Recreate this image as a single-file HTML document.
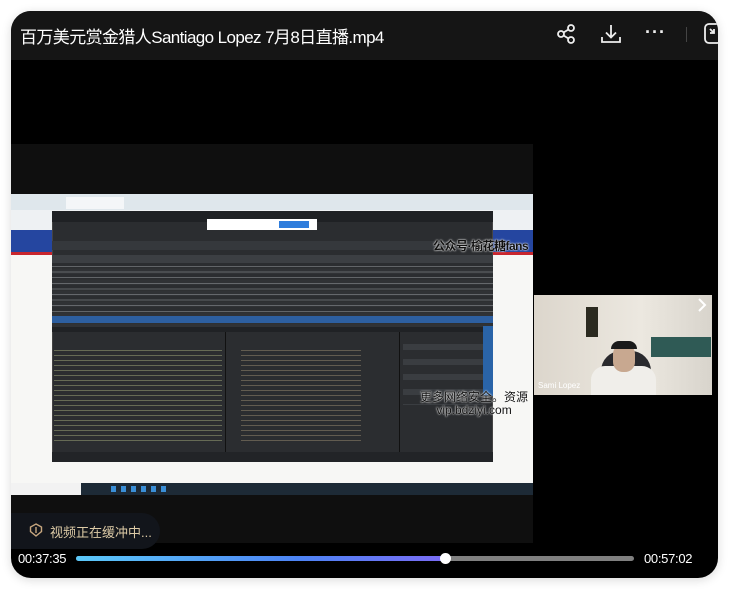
<!DOCTYPE html>
<html><head><meta charset="utf-8"><style>
*{margin:0;padding:0;box-sizing:border-box}
body{width:730px;height:589px;background:#fff;position:relative;overflow:hidden;font-family:"Liberation Sans","Noto Sans CJK SC",sans-serif}
.a{position:absolute}
.player{left:11px;top:11px;width:707px;height:567px;background:#000;border-radius:20px;overflow:hidden;box-shadow:0 2px 10px rgba(0,0,0,.15)}
.hdr{left:0;top:0;width:707px;height:49px;background:#151515}
</style></head><body>
<div class="a player">
 <div class="a hdr"></div>
 <div class="a" style="left:9px;top:12px;color:#fff;font-size:17px;letter-spacing:-0.6px">百万美元赏金猎人Santiago Lopez 7月8日直播.mp4</div>
 <svg class="a" style="left:545px;top:12px" width="22" height="22" viewBox="0 0 22 22" fill="none" stroke="#eee" stroke-width="1.8"><circle cx="5" cy="11" r="3"/><circle cx="15" cy="5" r="3"/><circle cx="15" cy="17" r="3"/><path d="M7.6 9.5l4.8-3M7.6 12.5l4.8 3"/></svg>
 <svg class="a" style="left:589px;top:12px" width="22" height="22" viewBox="0 0 22 22" fill="none" stroke="#eee" stroke-width="1.8"><path d="M11 2v12M6 9.5l5 5 5-5M2 14v5h18v-5"/></svg>
 <div class="a" style="left:634px;top:11px;color:#eee;font-size:18px;font-weight:bold;letter-spacing:1px">···</div>
 <div class="a" style="left:675px;top:16px;width:1px;height:15px;background:#444"></div>
 <svg class="a" style="left:693px;top:11px" width="16" height="24" viewBox="0 0 16 24" fill="none" stroke="#eee" stroke-width="1.8"><rect x="1" y="2" width="16" height="19" rx="4"/><path d="M6 7l4 4M10 7v4H6"/></svg>

 <div class="a" style="left:0;top:133px;width:522px;height:399px;background:#0f0f0f"></div>
 <div class="a" style="left:0;top:183px;width:522px;height:289px;background:#f7f7f5"></div>
 <div class="a" style="left:0;top:183px;width:522px;height:16px;background:#dfe7ec"></div>
 <div class="a" style="left:55px;top:186px;width:58px;height:12px;background:#f4f6f8"></div>
 <div class="a" style="left:0;top:199px;width:522px;height:20px;background:#eef1f3"></div>
 <div class="a" style="left:0;top:219px;width:522px;height:25px;background:#2546a0;border-bottom:3px solid #c8262e"></div>
 <div class="a" style="left:0;top:472px;width:522px;height:12px;background:#1d2a36"></div>
 <div class="a" style="left:0;top:472px;width:70px;height:12px;background:#f2f2f2"></div>
 <div class="a" style="left:100px;top:475px;width:60px;height:6px;background:repeating-linear-gradient(90deg,#3a8fd8 0 5px,transparent 5px 10px)"></div>
 <div class="a" style="left:41px;top:200px;width:441px;height:251px;background:#2b2d30;border:1px solid #444"></div>
 <div class="a" style="left:41px;top:200px;width:441px;height:11px;background:#1f2124"></div>
 <div class="a" style="left:196px;top:208px;width:110px;height:11px;background:#fff"></div>
 <div class="a" style="left:268px;top:210px;width:30px;height:7px;background:#2f7ddc"></div>
 <div class="a" style="left:41px;top:230px;width:441px;height:9px;background:#35383c"></div>
 <div class="a" style="left:41px;top:244px;width:441px;height:8px;background:#3c3f43"></div>
 <div class="a" style="left:41px;top:252px;width:441px;height:64px;background:repeating-linear-gradient(180deg,#2b2d30 0 5.5px,#303235 5.5px 11px)"></div>
 <div class="a" style="left:41px;top:252px;width:441px;height:64px;background:repeating-linear-gradient(180deg,transparent 0 3px,rgba(200,205,210,.35) 3px 4px,transparent 4px 5.6px)"></div>
 <div class="a" style="left:41px;top:305px;width:441px;height:7px;background:#2d5fa0"></div>
 <div class="a" style="left:41px;top:316px;width:441px;height:5px;background:#202225"></div>
 <div class="a" style="left:214px;top:321px;width:1px;height:120px;background:#111"></div>
 <div class="a" style="left:388px;top:321px;width:1px;height:120px;background:#111"></div>
 <div class="a" style="left:43px;top:337px;width:168px;height:96px;background:repeating-linear-gradient(180deg,transparent 0 2px,rgba(190,200,140,.4) 2px 3px,transparent 3px 5px)"></div>
 <div class="a" style="left:230px;top:337px;width:120px;height:96px;background:repeating-linear-gradient(180deg,transparent 0 2px,rgba(200,180,140,.35) 2px 3px,transparent 3px 5px)"></div>
 <div class="a" style="left:392px;top:324px;width:80px;height:70px;background:repeating-linear-gradient(180deg,transparent 0 9px,#3a3d41 9px 15px)"></div>
 <div class="a" style="left:472px;top:315px;width:10px;height:70px;background:#2a64a8"></div>
 <div class="a" style="left:41px;top:441px;width:441px;height:10px;background:#222427"></div>
 <div class="a" style="left:422px;top:226px;font-size:12px;color:#111;font-weight:bold;text-shadow:0 0 2px #fff,0 0 1px #fff;letter-spacing:-0.5px">公众号·榆花糖fans</div>
 <div class="a" style="left:409px;top:380px;font-size:12px;color:#111;line-height:13px;text-align:center;text-shadow:0 0 2px #fff,0 0 1px #fff">更多网络安全。资源<br>vip.bdziyi.com</div>
 <div class="a" style="left:523px;top:284px;width:178px;height:100px;background:linear-gradient(90deg,#dcd6cc,#ece8e0 60%,#d8d4cc)"></div>
 <div class="a" style="left:575px;top:296px;width:12px;height:30px;background:#2b2a20"></div>
 <div class="a" style="left:640px;top:326px;width:60px;height:20px;background:#2f5a55"></div>
 <div class="a" style="left:590px;top:340px;width:50px;height:44px;background:#2a2a2e;border-radius:20px 20px 0 0"></div>
 <div class="a" style="left:580px;top:355px;width:65px;height:29px;background:#f0eeea;border-radius:14px 14px 0 0"></div>
 <div class="a" style="left:602px;top:333px;width:22px;height:28px;background:#c8a890;border-radius:10px"></div>
 <div class="a" style="left:600px;top:330px;width:26px;height:8px;background:#1a1a1a;border-radius:8px 8px 0 0"></div>
 <div class="a" style="left:527px;top:370px;font-size:8px;color:#fff">Sami Lopez</div>
 <svg class="a" style="left:685px;top:286px" width="12" height="16" viewBox="0 0 12 16" fill="none" stroke="#fff" stroke-width="2"><path d="M3 2l6 6-6 6"/></svg>

 <div class="a" style="left:0;top:502px;width:149px;height:36px;background:#12151b;border-radius:0 18px 18px 0"></div>
 <svg class="a" style="left:18px;top:512px" width="14" height="14" viewBox="0 0 14 14" fill="none" stroke="#c7a77f" stroke-width="1.4"><path d="M7 1l5.5 3v4.5L7 13 1.5 8.5V4z"/><path d="M7 4v6" /></svg>
 <div class="a" style="left:39px;top:511px;color:#dccaa6;font-size:13px">视频正在缓冲中...</div>
 <div class="a" style="left:7px;top:540px;color:#fff;font-size:13px;letter-spacing:-0.3px">00:37:35</div>
 <div class="a" style="left:65px;top:545px;width:558px;height:5px;background:#808080;border-radius:3px"></div>
 <div class="a" style="left:65px;top:545px;width:369px;height:5px;background:linear-gradient(90deg,#5bc8f8,#4d84f5 60%,#7a6cf5);border-radius:3px"></div>
 <div class="a" style="left:429px;top:542px;width:11px;height:11px;background:#fff;border-radius:50%"></div>
 <div class="a" style="left:633px;top:540px;color:#fff;font-size:13px;letter-spacing:-0.3px">00:57:02</div>
</div>
</body></html>
